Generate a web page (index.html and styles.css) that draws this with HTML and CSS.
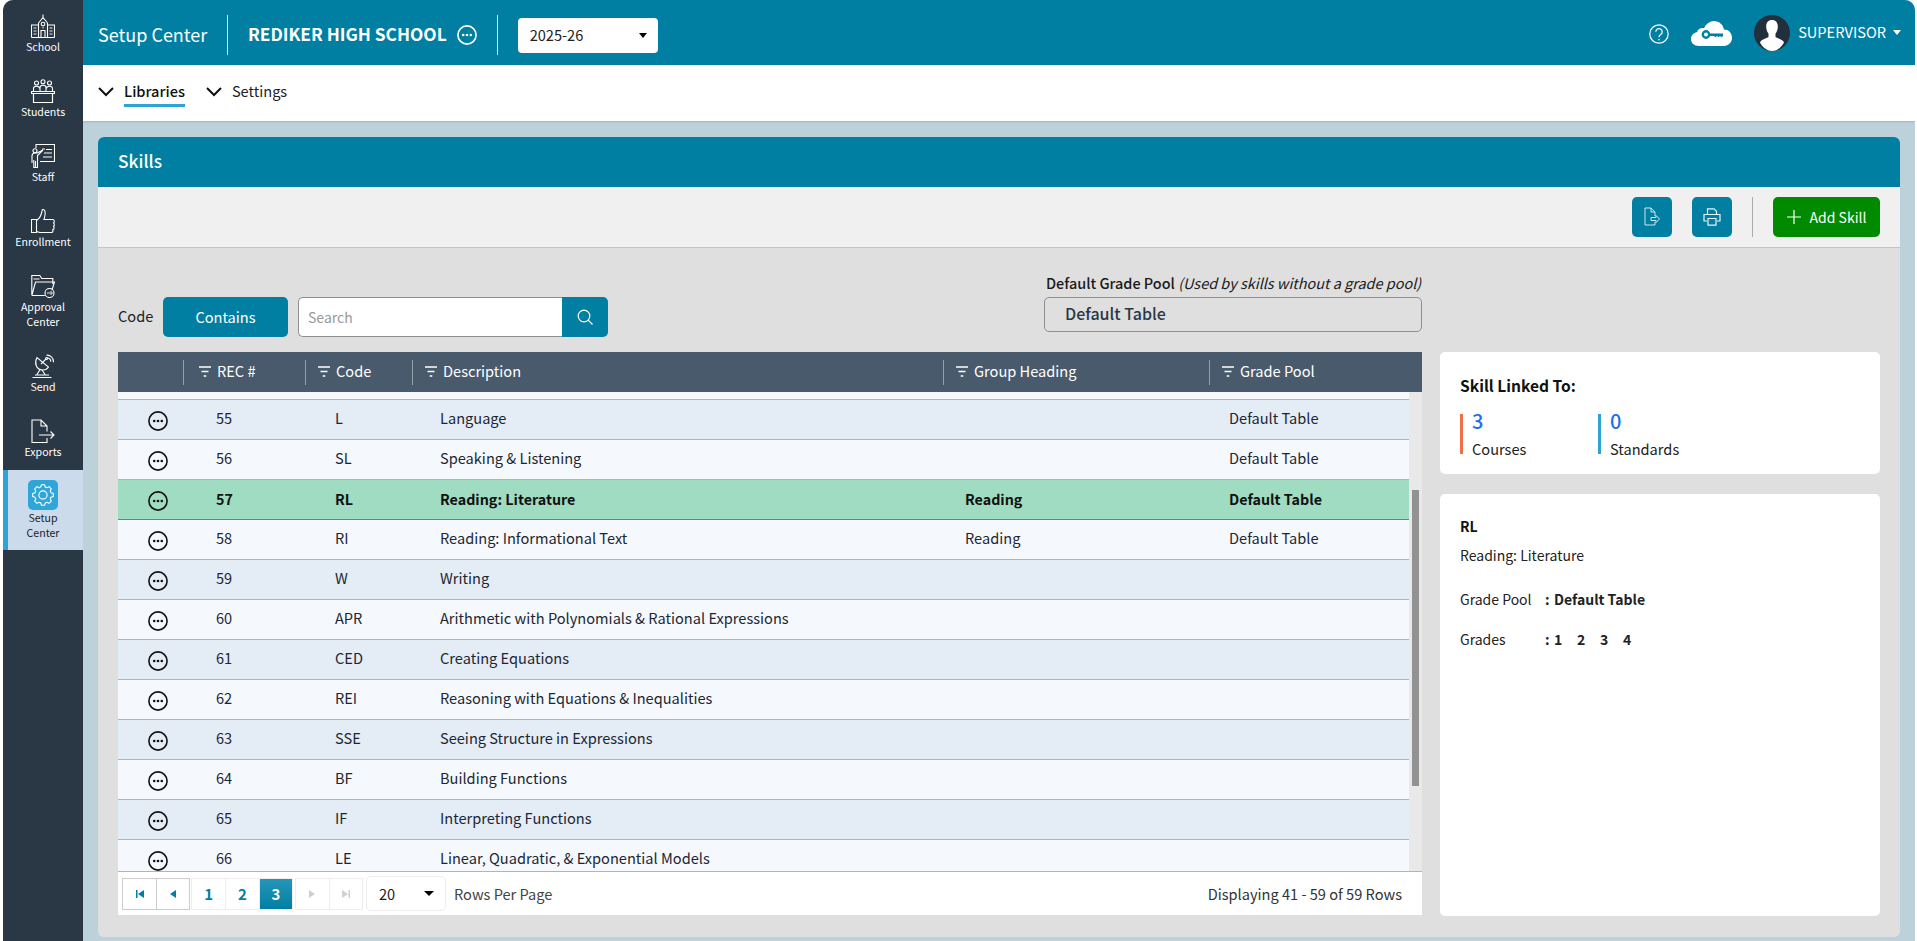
FILE: index.html
```html
<!DOCTYPE html>
<html lang="en">
<head>
<meta charset="utf-8">
<title>Skills - Setup Center</title>
<link rel="stylesheet" href="styles.css">
</head>
<body>
<svg class="defs" aria-hidden="true">
  <symbol id="more" viewBox="0 0 20 20"><circle cx="10" cy="10" r="9.100" fill="none" stroke="currentColor" stroke-width="1.600"/><circle cx="6.200" cy="10" r="1.300" fill="currentColor"/><circle cx="10" cy="10" r="1.300" fill="currentColor"/><circle cx="13.800" cy="10" r="1.300" fill="currentColor"/></symbol>
  <symbol id="filter" viewBox="0 0 12 11"><path d="M0 1h12M2.500 5.500h7M4.700 10h2.600" fill="none" stroke="currentColor" stroke-width="1.400"/></symbol>
  <symbol id="chev" viewBox="0 0 16 10"><path d="M1 1l7 7 7-7" fill="none" stroke="currentColor" stroke-width="2"/></symbol>
  <symbol id="gear-tooth" viewBox="0 0 24 24"><path d="M9.500 3.400L10.300.8h3.400l.8 2.600A9 9 0 0 1 16.310 4.150" fill="none" stroke="currentColor" stroke-width="1.200"/></symbol>
</svg>
<div class="app">
  <nav class="sidebar">
    <a class="side-item">
      <svg class="side-icon" viewBox="0 0 24 24" fill="none" stroke="currentColor"><path d="M12 .5v3M7.500 9L12 3.500 16.500 9M7.500 23.500V9M16.500 23.500V9M.5 23.500V11h7M23.500 23.500V11h-7M.5 23.500h23M10 23.500v-7h4v7"/><circle cx="12" cy="10" r="1.800"/><path d="M2.500 14h3M2.500 17h3M2.500 20h3M18.500 14h3M18.500 17h3M18.500 20h3M12 12.500v2" stroke-width=".9"/></svg>
      <span>School</span>
    </a>
    <a class="side-item">
      <svg class="side-icon" viewBox="0 0 24 24" fill="none" stroke="currentColor"><circle cx="5.500" cy="4" r="2"/><circle cx="12" cy="2.800" r="2"/><circle cx="18.500" cy="4" r="2"/><path d="M2.500 12V9.500c0-3 6-3 6 0M9 12V8.500c0-3 6-3 6 0V12M15.500 9.500c0-3 6-3 6 0V12"/><path d="M.5 12.500h23v2H.5zM2.500 14.500v9h19v-9" stroke-width="1.200"/></svg>
      <span>Students</span>
    </a>
    <a class="side-item">
      <svg class="side-icon" viewBox="0 0 24 24" fill="none" stroke="currentColor"><path d="M5 4V.5h18.500v17H9M11 5h3M15 5.500h6M13 9h8M12 13h9"/><circle cx="4" cy="6.800" r="2"/><path d="M1 19v-7c0-2.500 1.500-3 3-3h2l6-3-5.500 5.500V23.500H2.800V16M4.500 23.500V17"/></svg>
      <span>Staff</span>
    </a>
    <a class="side-item">
      <svg class="side-icon" viewBox="0 0 24 24" fill="none" stroke="currentColor"><path d="M.5 10.500h5v13h-5zM5.500 11.500c3.500-2 5-5.500 5.800-10.800 3-1 3.700 3 1.700 9.800h8.500c2.300 0 2.300 3.500.5 3.500 1.800 0 1.800 3.400 0 3.400 1.500 0 1.500 3.300-.3 3.300.8 2-.2 2.800-1.500 2.800H9c-1.500 0-2-1-3.500-1"/></svg>
      <span>Enrollment</span>
    </a>
    <a class="side-item tall">
      <svg class="side-icon" viewBox="0 0 24 24" fill="none" stroke="currentColor"><path d="M.8 21V1.500h8l2 3h11V10M2.500 5h6M.8 21.500L4.500 8h19l-2.500 8M.8 21.500h13"/><circle cx="18.500" cy="19" r="4.500"/><path d="M16 19h5M19.500 17l2 2-2 2" stroke-width=".9"/></svg>
      <span>Approval<br>Center</span>
    </a>
    <a class="side-item">
      <svg class="side-icon" viewBox="0 0 24 24" fill="none" stroke="currentColor"><path d="M6 3.500c-3 5-1 12 5.500 12.500 2.500.2 4.500-.8 6-3zM10 10l5-5"/><circle cx="15.500" cy="4.500" r="1"/><path d="M15.500 1.200c3.500-.5 7.300 2.800 7 7M16 4c2-.3 4 1.500 3.800 3.800M9 15.500l-3 5M11 16l3 4.500M1.500 23.500h19M4 21h14"/></svg>
      <span>Send</span>
    </a>
    <a class="side-item">
      <svg class="side-icon" viewBox="0 0 24 24" fill="none" stroke="currentColor" stroke-width="1.300"><path d="M16 12.500V7l-6-6H1v22.500h15V19M10 1v6h6"/><path d="M8 16h15M19.500 12.500L23 16l-3.500 3.500"/></svg>
      <span>Exports</span>
    </a>
    <a class="side-item tall active">
      <span class="gear-box">
        <svg class="gear" viewBox="0 0 24 24" fill="none" stroke="currentColor" stroke-width="1.200">
          <use href="#gear-tooth"/><use href="#gear-tooth" transform="rotate(45 12 12)"/><use href="#gear-tooth" transform="rotate(90 12 12)"/><use href="#gear-tooth" transform="rotate(135 12 12)"/><use href="#gear-tooth" transform="rotate(180 12 12)"/><use href="#gear-tooth" transform="rotate(225 12 12)"/><use href="#gear-tooth" transform="rotate(270 12 12)"/><use href="#gear-tooth" transform="rotate(315 12 12)"/>
          <circle cx="12" cy="12" r="4.500"/>
        </svg>
      </span>
      <span>Setup<br>Center</span>
    </a>
  </nav>

  <div class="main">
    <header class="topbar">
      <span class="app-name">Setup Center</span>
      <span class="top-div"></span>
      <span class="school">REDIKER HIGH SCHOOL</span>
      <svg class="school-more"><use href="#more"/></svg>
      <span class="top-div second"></span>
      <div class="year">2025-26<i class="caret dark"></i></div>
      <div class="top-right">
        <svg class="help" viewBox="0 0 20 20" fill="none" stroke="currentColor" stroke-width="1.200"><circle cx="10" cy="10" r="9.200"/><path d="M6.800 7.800a3.200 3.200 0 1 1 4.900 2.700c-1.100.7-1.700 1.300-1.700 2.800"/><circle cx="10" cy="15.700" r=".8" fill="currentColor" stroke="none"/></svg>
        <svg class="cloud" viewBox="0 0 41 25"><path fill="#fff" d="M8 25C3 25 0 22 0 18c0-3.500 2.500-6.200 6-7 1-3 4-4.500 7-3.800C15 3 19 0 23 0c5 0 9 3.500 10 8.500 4.500 0 8 3.500 8 8.300 0 4.700-3.500 8.200-8 8.200z"/><circle cx="15" cy="13.500" r="3.200" fill="none" stroke="#007fa3" stroke-width="2.400"/><path d="M18 12.500h14v2.500l-1.500 1.200-1.500-1.200-1.500 1.200-1.500-1.200-1.500 1.200-1.500-1.200H18z" fill="#007fa3"/></svg>
        <svg class="avatar" viewBox="0 0 36 36"><circle cx="18" cy="18" r="18" fill="#222f3d"/><path fill="#fff" d="M18 5c-4 0-6 3-5.800 7 .1 2.500 1 5 2.300 6.700v3.300c-2 1.500-7.500 2.500-8.500 5.500C8 31.500 12.500 36 18 36s10-4.500 12-8.500c-1-3-6.500-4-8.500-5.500v-3.300c1.300-1.700 2.200-4.200 2.300-6.700.2-4-1.800-7-5.800-7z"/></svg>
        <span class="user">SUPERVISOR</span><i class="caret light"></i>
      </div>
    </header>

    <div class="subnav">
      <a class="sub-item"><svg class="chev"><use href="#chev"/></svg><span class="sub-label current">Libraries</span></a>
      <a class="sub-item"><svg class="chev"><use href="#chev"/></svg><span class="sub-label">Settings</span></a>
    </div>

    <div class="content">
      <section class="panel">
        <h1 class="panel-title">Skills</h1>
        <div class="toolbar">
          <button class="tool-btn"><svg viewBox="0 0 16 20" width="16" height="20" fill="none" stroke="currentColor" stroke-width=".9"><path d="M11 9V5L7 1H1v17h10v-3M7 1v4h4"/><path d="M7 10.500h5V8.500l3.500 3.500-3.500 3.500v-2H7z"/></svg></button>
          <button class="tool-btn"><svg viewBox="0 0 18 18" width="18" height="18" fill="none" stroke="currentColor" stroke-width="1.200"><path d="M4.500 6V.8h6.500l2.500 2.500V6M4 13H1V6.500h16V13h-3"/><path d="M5 10.500h8v6.700H5z"/></svg></button>
          <span class="tool-div"></span>
          <button class="add-btn"><svg viewBox="0 0 14 14" width="14" height="14" fill="none" stroke="currentColor" stroke-width="1.200"><path d="M7 0v14M0 7h14"/></svg>Add Skill</button>
        </div>
        <div class="panel-body">
          <div class="filters">
            <span class="filter-label">Code</span>
            <button class="contains">Contains</button>
            <div class="search">
              <input class="search-input" placeholder="Search">
              <button class="search-btn"><svg viewBox="0 0 16 16" width="16" height="16" fill="none" stroke="currentColor" stroke-width="1.200"><circle cx="7" cy="7" r="5.800"/><path d="M11.200 11.200L15.500 15.500"/></svg></button>
            </div>
            <div class="pool">
              <div class="pool-label"><b>Default Grade Pool</b> <em>(Used by skills without a grade pool)</em></div>
              <div class="pool-box">Default Table</div>
            </div>
          </div>

          <div class="table">
            <div class="thead">
              <div class="th"></div>
              <div class="th rec"><svg class="fil"><use href="#filter"/></svg>REC #</div>
              <div class="th"><svg class="fil"><use href="#filter"/></svg>Code</div>
              <div class="th"><svg class="fil"><use href="#filter"/></svg>Description</div>
              <div class="th"><svg class="fil"><use href="#filter"/></svg>Group Heading</div>
              <div class="th"><svg class="fil"><use href="#filter"/></svg>Grade Pool</div>
            </div>
            <div class="tbody-wrap">
              <div class="tbody">
                <div class="row-stub"></div>
                <div class="row odd"><span class="c0"><svg><use href="#more"/></svg></span><span class="c1">55</span><span class="c2">L</span><span class="c3">Language</span><span class="c4"></span><span class="c5">Default Table</span></div>
                <div class="row"><span class="c0"><svg><use href="#more"/></svg></span><span class="c1">56</span><span class="c2">SL</span><span class="c3">Speaking &amp; Listening</span><span class="c4"></span><span class="c5">Default Table</span></div>
                <div class="row selected"><span class="c0"><svg><use href="#more"/></svg></span><span class="c1">57</span><span class="c2">RL</span><span class="c3">Reading: Literature</span><span class="c4">Reading</span><span class="c5">Default Table</span></div>
                <div class="row"><span class="c0"><svg><use href="#more"/></svg></span><span class="c1">58</span><span class="c2">RI</span><span class="c3">Reading: Informational Text</span><span class="c4">Reading</span><span class="c5">Default Table</span></div>
                <div class="row odd"><span class="c0"><svg><use href="#more"/></svg></span><span class="c1">59</span><span class="c2">W</span><span class="c3">Writing</span><span class="c4"></span><span class="c5"></span></div>
                <div class="row"><span class="c0"><svg><use href="#more"/></svg></span><span class="c1">60</span><span class="c2">APR</span><span class="c3">Arithmetic with Polynomials &amp; Rational Expressions</span><span class="c4"></span><span class="c5"></span></div>
                <div class="row odd"><span class="c0"><svg><use href="#more"/></svg></span><span class="c1">61</span><span class="c2">CED</span><span class="c3">Creating Equations</span><span class="c4"></span><span class="c5"></span></div>
                <div class="row"><span class="c0"><svg><use href="#more"/></svg></span><span class="c1">62</span><span class="c2">REI</span><span class="c3">Reasoning with Equations &amp; Inequalities</span><span class="c4"></span><span class="c5"></span></div>
                <div class="row odd"><span class="c0"><svg><use href="#more"/></svg></span><span class="c1">63</span><span class="c2">SSE</span><span class="c3">Seeing Structure in Expressions</span><span class="c4"></span><span class="c5"></span></div>
                <div class="row"><span class="c0"><svg><use href="#more"/></svg></span><span class="c1">64</span><span class="c2">BF</span><span class="c3">Building Functions</span><span class="c4"></span><span class="c5"></span></div>
                <div class="row odd"><span class="c0"><svg><use href="#more"/></svg></span><span class="c1">65</span><span class="c2">IF</span><span class="c3">Interpreting Functions</span><span class="c4"></span><span class="c5"></span></div>
                <div class="row"><span class="c0"><svg><use href="#more"/></svg></span><span class="c1">66</span><span class="c2">LE</span><span class="c3">Linear, Quadratic, &amp; Exponential Models</span><span class="c4"></span><span class="c5"></span></div>
              </div>
              <div class="scrollbar"><div class="thumb"></div></div>
            </div>
            <div class="pager">
              <div class="pg-group strong">
                <button class="pg"><svg viewBox="0 0 8 8" width="8" height="8"><path d="M0 0h1.500v8H0zM8 0v8L2 4z" fill="currentColor"/></svg></button>
                <button class="pg"><svg viewBox="0 0 6 8" width="6" height="8"><path d="M6 0v8L0 4z" fill="currentColor"/></svg></button>
              </div>
              <div class="pg-group">
                <button class="pg num">1</button>
                <button class="pg num">2</button>
                <button class="pg num on">3</button>
              </div>
              <div class="pg-group off">
                <button class="pg"><svg viewBox="0 0 6 8" width="6" height="8"><path d="M0 0v8l6-4z" fill="currentColor"/></svg></button>
                <button class="pg"><svg viewBox="0 0 8 8" width="8" height="8"><path d="M0 0v8l6-4zM6.500 0H8v8H6.500z" fill="currentColor"/></svg></button>
              </div>
              <div class="per-page">20<i class="caret dark"></i></div>
              <span class="per-label">Rows Per Page</span>
              <span class="displaying">Displaying 41 - 59 of 59 Rows</span>
            </div>
          </div>

          <aside class="side-cards">
            <div class="card links">
              <h2 class="card-title">Skill Linked To:</h2>
              <div class="stats">
                <div class="stat orange"><span class="stat-num">3</span><span class="stat-label">Courses</span></div>
                <div class="stat blue"><span class="stat-num">0</span><span class="stat-label">Standards</span></div>
              </div>
            </div>
            <div class="card detail">
              <div class="d-code">RL</div>
              <div class="d-desc">Reading: Literature</div>
              <div class="d-line pool-line"><span class="d-key">Grade Pool</span><b class="d-colon">:</b><b>Default Table</b></div>
              <div class="d-line"><span class="d-key">Grades</span><b class="d-colon">:</b><b class="grade">1</b><b class="grade">2</b><b class="grade">3</b><b class="grade">4</b></div>
            </div>
          </aside>
        </div>
      </section>
    </div>
  </div>
</div>
</body>
</html>
```
FILE: styles.css
```css
* { box-sizing: border-box; }
html, body { margin: 0; height: 941px; overflow: hidden; background: #fff; }
body { font-family: "Noto Sans CJK SC", "Noto Sans", sans-serif; font-size: 14px; color: #1d2731; }
button { font-family: inherit; border: 0; padding: 0; cursor: pointer; }
.defs { display: none; }

.app { display: flex; height: 941px; margin: 0 2px 0 3px; background: #bdd1da; border-radius: 10px 10px 0 0; overflow: hidden; }

/* sidebar */
.sidebar { width: 80px; flex: none; background: #2a3744; color: #fff; display: flex; flex-direction: column; }
.side-item { height: 65px; flex: none; display: flex; flex-direction: column; align-items: center; padding-top: 14px; font-size: 10.6px; line-height: 15px; text-align: center; color: #fff; }
.side-item.tall { height: 80px; }
.side-icon { width: 24px; height: 24px; margin-bottom: 1px; stroke-width: 1.1; }
.side-item.active { background: #cbdbeb; color: #222; border-left: 5px solid #2ea3d5; padding: 10px 5px 0 0; }
.gear-box { width: 30px; height: 30px; background: #2ea6da; border-radius: 5px; display: flex; align-items: center; justify-content: center; color: #fff; }
.gear { width: 22px; height: 22px; }

/* top bar */
.main { flex: 1; min-width: 0; display: flex; flex-direction: column; }
.topbar { height: 65px; flex: none; background: #007fa3; color: #fff; display: flex; align-items: center; padding: 5px 0 0 15px; }
.app-name { font-size: 18px; line-height: 24px; width: 129px; margin-bottom: 2px; }
.top-div { width: 1px; height: 40px; background: #d7e8ee; }
.top-div.second { margin-left: 20px; }
.school { font-size: 17.3px; line-height: 24px; font-weight: 700; margin: 0 0 2px 20px; }
.school-more { width: 20px; height: 20px; margin-left: 10px; color: #fff; }
.year { width: 140px; height: 35px; margin-left: 20px; background: #fff; border-radius: 4px; color: #222; font-size: 14.6px; line-height: 31px; padding: 0 11px 2px 12px; display: flex; align-items: center; justify-content: space-between; }
.caret { display: inline-block; width: 0; height: 0; border-left: 4.5px solid transparent; border-right: 4.5px solid transparent; border-top: 5px solid #000; }
.year .caret { margin-top: 2px; }
.caret.light { border-top-color: #fff; margin: 0 0 5px 7px; }
.top-right { margin-left: auto; display: flex; align-items: center; padding-right: 14px; }
.help { width: 20px; height: 20px; color: #fff; margin: 0 22px 2px 0; }
.cloud { width: 41px; height: 25px; margin: 0 22px 3px 0; }
.avatar { width: 36px; height: 36px; margin: 0 8px 5px 0; }
.user { font-size: 14.6px; line-height: 20px; margin-bottom: 6px; }

/* sub nav */
.subnav { height: 56px; flex: none; background: #fff; display: flex; padding-left: 15px; box-shadow: 0 1px 2px rgba(40, 70, 90, .2); position: relative; }
.sub-item { display: flex; align-items: flex-start; padding-top: 13px; margin-right: 21px; color: #222; }
.chev { width: 16px; height: 10px; margin: 9px 10px 0 0; color: #111; }
.sub-label { font-size: 14.6px; line-height: 20px; padding: 3px 0 2px; height: 29px; }
.sub-label.current { font-weight: 500; border-bottom: 3px solid #2ea3d5; color: #111; }

/* panel */
.content { flex: 1; min-height: 0; padding: 16px 15px 4px; }
.panel { height: 100%; display: flex; flex-direction: column; border-radius: 6px; overflow: hidden; background: #dfdfdf; }
.panel-title { margin: 0; height: 50px; flex: none; background: #007fa3; color: #fff; font-size: 17.3px; line-height: 48px; font-weight: 500; padding-left: 20px; }
.toolbar { height: 61px; flex: none; background: #f0f0f0; border-bottom: 1px solid #c4c4c4; display: flex; align-items: flex-start; padding: 10px 20px 0 0; justify-content: flex-end; }
.tool-btn { width: 40px; height: 40px; background: #007fa3; color: #e6f3f7; border-radius: 5px; margin-left: 20px; display: flex; align-items: center; justify-content: center; }
.tool-div { width: 1px; height: 40px; background: #aaa; margin: 0 20px 0 20px; }
.add-btn { width: 107px; height: 40px; background: #008a00; color: #fff; border-radius: 5px; font-size: 14px; display: flex; align-items: center; justify-content: center; gap: 9px; }

.panel-body { flex: 1; min-height: 0; display: grid; grid-template-columns: 1304px 440px; grid-template-rows: 104px 563px; column-gap: 18px; padding-left: 20px; }

/* filter row */
.filters { grid-column: 1; grid-row: 1; display: flex; align-items: flex-end; padding-bottom: 15px; }
.filter-label { font-size: 14.6px; line-height: 20px; margin: 0 10px 11px 0; width: 35px; color: #222; }
.contains { width: 125px; height: 40px; background: #007fa3; color: #fff; border-radius: 5px; font-size: 14.6px; padding-bottom: 2px; }
.search { display: flex; margin-left: 10px; height: 40px; }
.search-input { width: 264px; height: 40px; border: 1px solid #8e8e8e; border-right: 0; border-radius: 5px 0 0 5px; background: #fff; padding: 0 9px; font: 14px "Noto Sans CJK SC", "Noto Sans", sans-serif; outline: 0; }
.search-input::placeholder { color: #999; }
.search-btn { width: 46px; height: 40px; background: #007fa3; color: #fff; border-radius: 0 5px 5px 0; display: flex; align-items: center; justify-content: center; }
.pool { margin-left: auto; width: 378px; margin-bottom: 5px; }
.pool-label { font-size: 14.45px; line-height: 20px; margin-bottom: 4px; padding-left: 2px; color: #1a1a1a; white-space: nowrap; }
.pool-label b { font-weight: 500; }
.pool-box { height: 35px; border: 1px solid #8f8f8f; border-radius: 5px; padding-left: 20px; font-size: 16px; line-height: 31px; font-weight: 500; color: #2a3744; }

/* table */
.table { grid-column: 1; grid-row: 2; display: flex; flex-direction: column; height: 563px; background: #fff; }
.thead { height: 40px; flex: none; background: #485a6b; color: #fff; display: grid; grid-template-columns: 65px 122px 107px 531px 266px 213px; align-items: center; font-size: 14.6px; }
.th { height: 25px; line-height: 22px; display: flex; align-items: center; border-left: 1px solid #94a1ad; padding: 0 0 2px 12px; white-space: nowrap; }
.th:first-child { border-left: 0; }
.th.rec { padding-left: 15px; }
.fil { width: 12px; height: 11px; margin-right: 6px; color: #fff; }
.tbody-wrap { height: 479px; flex: none; display: flex; }
.tbody { flex: 1; min-width: 0; overflow: hidden; background: #f5f9fd; }
.row-stub { height: 8px; border-bottom: 1px solid #9fb8d8; }
.row { height: 40px; display: grid; grid-template-columns: 65px 122px 107px 531px 265px 201px; align-items: center; border-bottom: 1px solid #9fb8d8; background: #f5f9fd; font-size: 14.6px; line-height: 20px; color: #1d2731; }
.row.odd { background: #e4ecf6; }
.row.selected { background: #9fdcc2; border-bottom-color: #4a8f8a; font-weight: 700; font-size: 14.3px; color: #111; }
.row span { padding-bottom: 4px; white-space: nowrap; }
.row.selected span { padding-bottom: 2px; }
.c0 { display: flex; justify-content: center; color: #111; }
.row span.c0 { padding: 2px 0 0 15px; }
.c0 svg { width: 20px; height: 20px; }
.c1 { padding-left: 33px; }
.c2 { padding-left: 30px; }
.c3 { padding-left: 28px; }
.c4 { padding-left: 22px; }
.c5 { padding-left: 21px; }
.scrollbar { width: 13px; flex: none; background: #e9e9e9; padding: 98px 3px 0; }
.thumb { width: 7px; height: 296px; background: #929292; }

/* pager */
.pager { flex: 1; border-top: 1px solid #9fb8d8; display: flex; align-items: center; padding: 0 20px 0 4px; font-size: 14.6px; color: #333; }
.pg-group { display: flex; height: 32px; border: 1px solid #eee; margin-right: 1px; }
.pg-group.strong { border-color: #ccc; }
.pg-group.off { color: #cfcfcf; margin-left: 1px; margin-right: 3px; }
.pg { width: 33px; height: 100%; background: #fff; color: #007fa3; border-left: 1px solid #eee; display: flex; align-items: center; justify-content: center; font-size: 15px; font-weight: 700; }
.pg.num { width: 33.33px; }
.pg:first-child { border-left: 0; }
.strong .pg { border-left-color: #ccc; }
.off .pg { color: #cfcfcf; }
.pg.on { background: linear-gradient(#2596b8, #007fa3); color: #fff; }
.per-page { width: 80px; height: 35px; border: 1px solid #eee; border-radius: 5px; display: flex; align-items: center; justify-content: space-between; padding: 0 11px 0 12px; color: #222; }
.per-page .caret { border-left-width: 5px; border-right-width: 5px; }
.per-label { margin-left: 8px; color: #444; }
.displaying { margin-left: auto; color: #333; }

/* right cards */
.side-cards { grid-column: 2; grid-row: 2; display: flex; flex-direction: column; gap: 20px; height: 564px; }
.card { background: #fff; border-radius: 5px; padding: 0 20px; }
.links { height: 122px; padding-top: 21px; }
.card-title { margin: 0; font-size: 15.6px; line-height: 24px; font-weight: 700; color: #111; }
.stats { display: flex; margin-top: 17px; }
.stat { width: 138px; height: 40px; border-left: 3px solid; padding-left: 9px; display: flex; flex-direction: column; }
.stat.orange { border-color: #ee7046; }
.stat.blue { border-color: #2ea3d5; }
.stat-num { font-size: 20px; line-height: 14px; font-weight: 500; color: #1a6ff0; }
.stat-label { font-size: 14.6px; line-height: 20px; margin-top: 11px; color: #222; }
.detail { flex: 1; padding-top: 22px; font-size: 14px; line-height: 20px; color: #222; }
.d-code { font-weight: 700; color: #111; }
.d-desc { margin-top: 9px; }
.d-line { display: flex; margin-top: 20px; }
.pool-line { margin-top: 24px; }
.d-key { width: 85px; }
.d-colon { width: 9px; }
.grade { width: 23px; }
```
